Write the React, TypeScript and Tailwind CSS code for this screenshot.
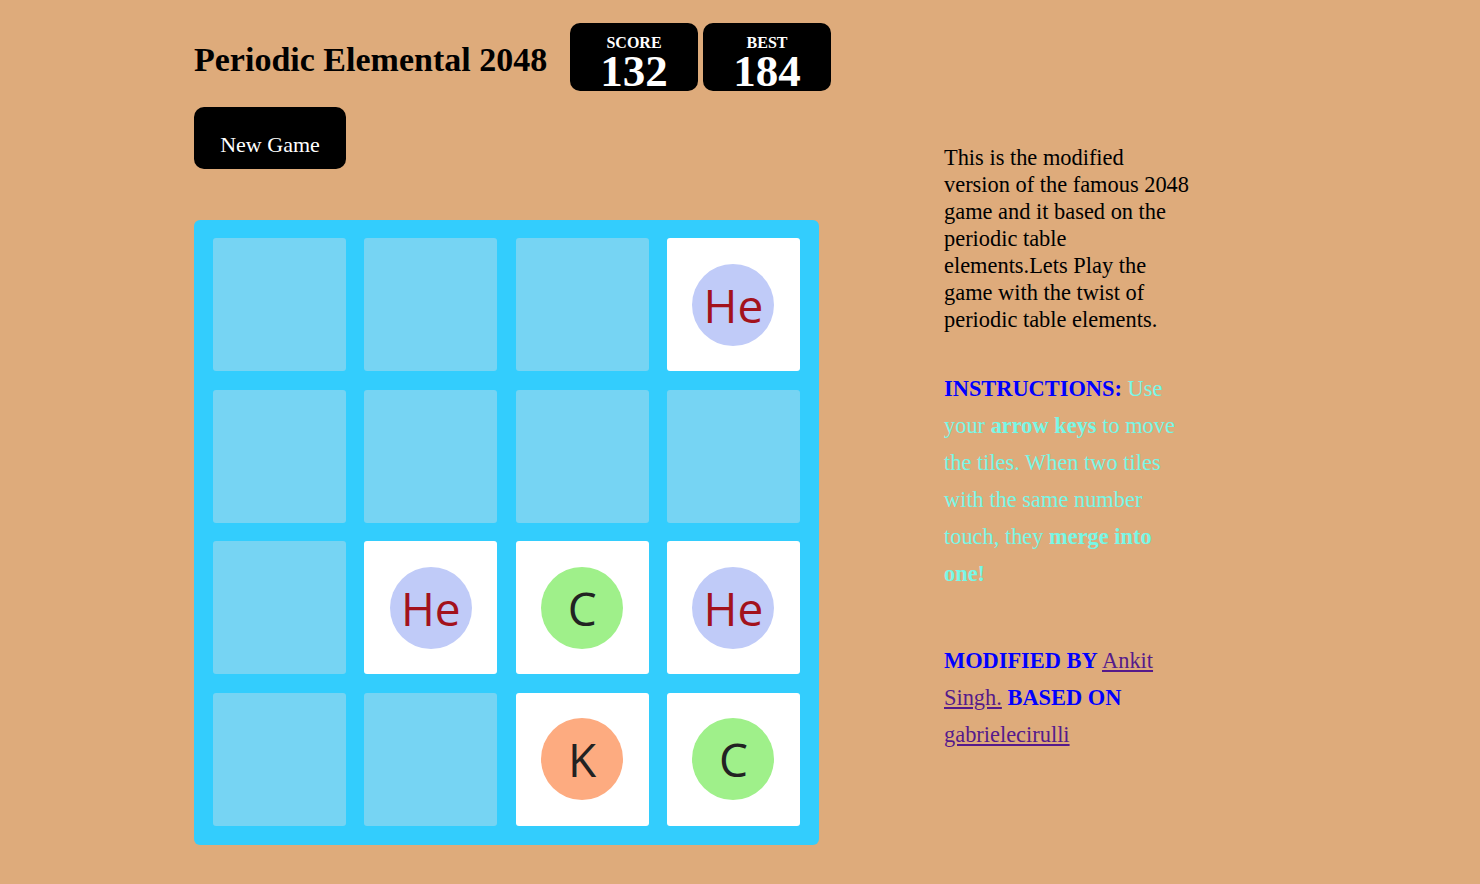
import React from "react";

type Cell = { sym: string; circle: string; text: string } | null;

const HE = { sym: "He", circle: "bg-[#c0cbf8]", text: "text-[#a3121c]" };
const C = { sym: "C", circle: "bg-[#9ff08a]", text: "text-[#222222]" };
const K = { sym: "K", circle: "bg-[#fdab80]", text: "text-[#222222]" };

const board: Cell[][] = [
  [null, null, null, HE],
  [null, null, null, null],
  [null, HE, C, HE],
  [null, null, K, C],
];

function Tile({ cell }: { cell: Cell }) {
  if (!cell) {
    return <div className="w-[133px] h-[133px] rounded-[3px] bg-[#76d4f3]" />;
  }
  return (
    <div className="w-[133px] h-[133px] rounded-[3px] bg-white flex items-center justify-center">
      <div className={`w-[82px] h-[82px] rounded-full flex items-center justify-center ${cell.circle}`}>
        <span className={`text-[46px] leading-none font-['Open_Sans',sans-serif] ${cell.text}`}>{cell.sym}</span>
      </div>
    </div>
  );
}

export default function App() {
  return (
    <div className="min-h-screen bg-[#deab7b] font-['Liberation_Serif','Times_New_Roman',serif] text-black">
      <div className="flex items-start pl-[194px]">
        {/* game column */}
        <div className="w-[625px] shrink-0 pt-[23px]">
          <div className="flex items-center">
            <h1 className="w-[376px] shrink-0 whitespace-nowrap text-[34px] font-bold leading-none pt-[6px]">
              Periodic Elemental 2048
            </h1>
            <div className="flex gap-[5px]">
              <div className="w-[128px] h-[68px] bg-black rounded-[10px] flex flex-col items-center text-white">
                <span className="text-[16px] font-bold leading-none mt-[12px]">SCORE</span>
                <span className="text-[45px] font-bold leading-none mt-[-2px]">132</span>
              </div>
              <div className="w-[128px] h-[68px] bg-black rounded-[10px] flex flex-col items-center text-white">
                <span className="text-[16px] font-bold leading-none mt-[12px]">BEST</span>
                <span className="text-[45px] font-bold leading-none mt-[-2px]">184</span>
              </div>
            </div>
          </div>

          <button className="mt-[16px] w-[152px] h-[62px] bg-black rounded-[10px] text-white text-[22px] pt-[12px]">
            New Game
          </button>

          <div className="mt-[51px] w-[625px] h-[625px] bg-[#33cdfd] rounded-[6px] px-[19px] pt-[18px] pb-[19px] flex flex-col justify-between">
            {board.map((row, r) => (
              <div key={r} className="flex justify-between">
                {row.map((cell, c) => (
                  <Tile key={c} cell={cell} />
                ))}
              </div>
            ))}
          </div>
        </div>

        {/* info column */}
        <div className="ml-[125px] w-[248px] pt-[144px]">
          <p className="text-[22.4px] leading-[27px]">
            This is the modified version of the famous 2048 game and it based on the periodic table elements.Lets Play the game with the twist of periodic table elements.
          </p>
          <p className="mt-[37px] text-[22.4px] leading-[37px] text-[#78f7e6]">
            <strong className="text-[#0000ff]">INSTRUCTIONS:</strong> Use your <strong>arrow keys</strong> to move the tiles. When two tiles with the same number touch, they <strong>merge into one!</strong>
          </p>
          <p className="mt-[50px] text-[22.4px] leading-[37px]">
            <strong className="text-[#0000ff]">MODIFIED BY</strong>{" "}
            <a href="#" className="text-[#551a8b] underline">Ankit Singh.</a>{" "}
            <strong className="text-[#0000ff]">BASED ON</strong>{" "}
            <a href="#" className="text-[#551a8b] underline">gabrielecirulli</a>
          </p>
        </div>
      </div>
    </div>
  );
}
